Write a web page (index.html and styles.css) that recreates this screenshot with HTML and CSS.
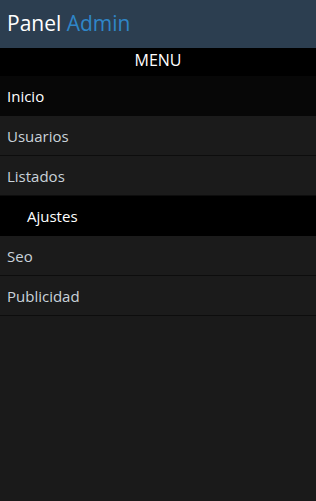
FILE: index.html
```html
<!doctype html>
<html lang="es">
<head>
	<meta charset="UTF-8">
	<title>Panel Admin</title>

	<link rel="stylesheet" href="styles.css">
</head>
<body>
	<header class="topbar">
		<h1 class="brand">Panel <span>Admin</span></h1>
	</header>

	<nav class="menu">
		<div class="menu-title">MENU</div>
		<ul class="menu-list">
			<li class="menu-item active"><a href="#">Inicio</a></li>
			<li class="menu-item"><a href="#">Usuarios</a></li>
			<li class="menu-item"><a href="#">Listados</a></li>
			<li class="menu-group"><a href="#">Ajustes</a></li>
			<li class="menu-item"><a href="#">Seo</a></li>
			<li class="menu-item"><a href="#">Publicidad</a></li>
		</ul>
	</nav>
</body>
</html>
```

FILE: styles.css
```css
html {
	box-sizing: border-box;
}

*, *:before, *:after {
	box-sizing: inherit;
}

body {
	margin: 0;
	min-height: 501px;
	font-family: "Open Sans", sans-serif;
	background: #1a1a1a;
	color: #fff;
}

a {
	color: inherit;
	text-decoration: none;
}

.topbar {
	height: 48px;
	background: #2c3e50;
	padding: 0 7px;
	display: flex;
	align-items: center;
}

.brand {
	margin: 0 0 3px;
	font-size: 21px;
	font-weight: normal;
	color: #fff;
}

.brand span {
	color: #2f86c8;
}

.menu-title {
	height: 28px;
	line-height: 24px;
	background: #000;
	text-align: center;
	font-size: 16px;
}

.menu-list {
	list-style: none;
	margin: 0;
	padding: 0;
}

.menu-list li {
	height: 40px;
	display: flex;
	align-items: center;
	padding: 0 7px;
	font-size: 15px;
}

.menu-item {
	background: #1b1b1b;
	color: #c9d2da;
	border-bottom: 1px solid #0d0d0d;
}

.menu-item.active {
	background: #070707;
	color: #fff;
	border-bottom: 0;
}

.menu-group {
	background: #000;
	color: #fff;
	padding-left: 27px !important;
}
```
